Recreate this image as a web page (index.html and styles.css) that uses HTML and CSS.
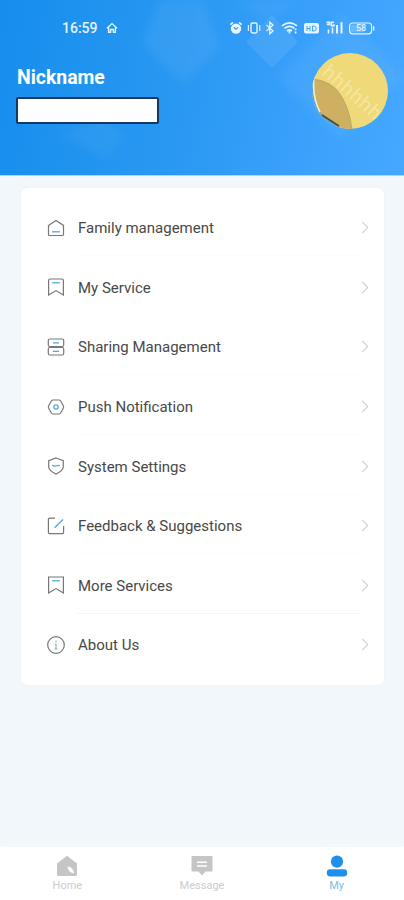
FILE: index.html
```html
<!DOCTYPE html>
<html lang="en">
	<head>
		<meta charset="UTF-8">
		<title>My</title>
		<link rel="stylesheet" href="styles.css">
	</head>
	<body>
		<div class="header">
			<svg class="header-bg" viewBox="0 0 404 176">
				<g fill="#fff">
					<path class="soft" opacity=".06" d="M160 0H204L219 48L183 84L142 43z"/>
					<path opacity=".08" d="M272 15L298 42L272 68L246 42z"/>
					<path class="soft" opacity=".05" d="M342 14L403 76L340 139L278 78z"/>
					<path class="soft" opacity=".045" d="M103 114L125 136L107 160L60 134z"/>
					<path class="soft" opacity=".04" d="M237 0H298L267 24z"/>
				</g>
			</svg>
			<div class="status">
				<span class="time">16:59</span>
				<svg class="status-home" viewBox="0 0 12 12"><path d="M1 6.2L6 1.6L11 6.2M2.6 5.5V10.4H4.6V7.5H7.4V10.4H9.4V5.5" fill="none" stroke="#e6f4ff" stroke-width="1.4"/></svg>
				<svg class="status-icons" viewBox="0 0 146 16" fill="none" stroke="#e6f4ff">
					<circle cx="7" cy="8.6" r="5.2" fill="#e6f4ff" stroke="none"/>
					<path d="M1.4 4.6L4 2.4M12.6 4.6L10 2.4" stroke-width="1.6"/>
					<path d="M4.8 7.2L7 9.2L9.2 7.4" stroke="#3397f3" stroke-width="1.2"/>
					<rect x="22" y="3" width="6" height="10" rx="1.4" stroke-width="1.4"/>
					<path d="M19.4 5V11M30.8 5V11" stroke-width="1.1"/>
					<path d="M37.5 5L44 11L40.8 13.8V2.2L44 5L37.5 11" stroke-width="1.3"/>
					<path d="M53 5.8Q60.5 -.2 68 5.8M55.5 8.4Q60.5 4.4 65.5 8.4M58 11Q60.5 9 63 11" stroke-width="1.7"/>
					<path d="M60.5 11V13.4M66.6 8.5V10.3M66.6 11.5V13.5" stroke-width="1.7"/>
					<rect x="75" y="3" width="15" height="10.6" rx="2" fill="#e6f4ff" stroke="none"/>
					<path d="M78 6V11M81 6V11M78 8.5H81M83.5 6V11H85Q87.3 10.5 87.3 8.5T85 6H83.5" stroke="#3397f3" stroke-width=".9"/>
					<path d="M97.5 2.2H100.5V4.4H97.8M105 2.2H102.5V5.8H105V4.2M99.5 9.5V13.6M103.5 7.5V13.6" stroke-width="1.6"/>
					<path d="M108 5V13.6M112.5 2.2V13.6" stroke-width="2"/>
					<rect x="120.6" y="3" width="22" height="10.8" rx="3" stroke-width="1.2"/>
					<path d="M144.7 6.3V10.4" stroke-width="1.4"/>
					<rect x="122" y="4.6" width="13" height="7.6" rx="1" fill="#e6f4ff" stroke="none" opacity=".25"/>
					<text x="127" y="11.4" class="battery-text">58</text>
				</svg>
			</div>
			<div class="user">
				<div>
					<div class="nickname">Nickname</div>
					<div class="account"></div>
				</div>
				<svg class="avatar" viewBox="0 0 76 76">
					<clipPath id="round"><circle cx="38" cy="38" r="38"/></clipPath>
					<g clip-path="url(#round)">
						<rect width="76" height="76" fill="#efd978"/>
						<path d="M-2 26Q21 26 31 46Q38 59 40 78H-2z" fill="#cfb063"/>
						<path d="M-1 26Q21 27 31 46Q38 59 40 77" fill="none" stroke="#bda765"/>
						<path d="M1 24Q1 50 10 62L27 73L24 78H-2V24z" fill="#42a4fa"/>
						<path d="M2 24Q0 45 8 59" fill="none" stroke="#f1edcf" stroke-width="1.6"/>
						<path d="M10 62L27 73" stroke="#4d4c36" stroke-width="1.6"/>
						<text class="avatar-text" transform="translate(9 21) rotate(41)">hhhhhh</text>
					</g>
				</svg>
			</div>
		</div>
		<ul class="menu">
			<li>
				<svg class="icon" viewBox="0 0 18 18"><path d="M1.5 6.4L9 1.5L16.5 6.4V15.4Q16.5 16.5 15.4 16.5H2.6Q1.5 16.5 1.5 15.4z"/><path class="blue" d="M5 12.8H13"/></svg>
				<span>Family management</span>
				<svg class="arrow" viewBox="0 0 8 14"><path d="M1 1L7 7L1 13"/></svg>
			</li>
			<li>
				<svg class="icon" viewBox="0 0 18 18"><path d="M1.6 17V2.3Q1.6 1 3 1H15Q16.4 1 16.4 2.3V17L9 12.6z"/><path class="blue" d="M5.2 4.8H12.8"/></svg>
				<span>My Service</span>
				<svg class="arrow" viewBox="0 0 8 14"><path d="M1 1L7 7L1 13"/></svg>
			</li>
			<li>
				<svg class="icon" viewBox="0 0 18 18"><rect x="1.3" y="1" width="15.4" height="7.5" rx="1.5"/><rect x="1.3" y="9.5" width="15.4" height="7.5" rx="1.5"/><path class="blue" d="M6 4.9H12M6 13.3H12"/></svg>
				<span>Sharing Management</span>
				<svg class="arrow" viewBox="0 0 8 14"><path d="M1 1L7 7L1 13"/></svg>
			</li>
			<li>
				<svg class="icon" viewBox="0 0 18 18"><path d="M5.8 2H12.2Q13 2 13.5 2.8L16.4 8Q16.8 9 16.4 10L13.5 15.2Q13 16 12.2 16H5.8Q5 16 4.5 15.2L1.6 10Q1.2 9 1.6 8L4.5 2.8Q5 2 5.8 2z"/><circle class="blue" cx="9" cy="9" r="2.1"/></svg>
				<span>Push Notification</span>
				<svg class="arrow" viewBox="0 0 8 14"><path d="M1 1L7 7L1 13"/></svg>
			</li>
			<li>
				<svg class="icon" viewBox="0 0 18 18"><path d="M9 1L16.3 3.6V10Q16 13.6 9 17.2Q2 13.6 1.7 10V3.6z"/><path class="blue" d="M5.2 8.3Q7.2 9.6 9 9T12.8 8.3"/></svg>
				<span>System Settings</span>
				<svg class="arrow" viewBox="0 0 8 14"><path d="M1 1L7 7L1 13"/></svg>
			</li>
			<li>
				<svg class="icon" viewBox="0 0 18 18"><path d="M8 1.2H2.6Q1.4 1.2 1.4 2.4V15.4Q1.4 16.6 2.6 16.6H15.2Q16.6 16.6 16.6 15.2V9"/><path class="blue" d="M7.6 10.8L16 2.5"/></svg>
				<span>Feedback &amp; Suggestions</span>
				<svg class="arrow" viewBox="0 0 8 14"><path d="M1 1L7 7L1 13"/></svg>
			</li>
			<li>
				<svg class="icon" viewBox="0 0 18 18"><path d="M1.6 17V1H16.4V17L9 12.6z"/><path class="blue" d="M5.2 4.8H12.8"/></svg>
				<span>More Services</span>
				<svg class="arrow" viewBox="0 0 8 14"><path d="M1 1L7 7L1 13"/></svg>
			</li>
			<li>
				<svg class="icon" viewBox="0 0 18 18"><circle cx="9" cy="9" r="8.3"/><path class="info" d="M9 4.6V6.2M7.8 8H9V13M7.5 13H10.5"/></svg>
				<span>About Us</span>
				<svg class="arrow" viewBox="0 0 8 14"><path d="M1 1L7 7L1 13"/></svg>
			</li>
		</ul>
		<div class="tabbar">
			<div class="tab">
				<svg viewBox="0 0 22 22"><path d="M1 8.4L11 .8L21 8.4V19.5Q21 21 19.5 21H2.5Q1 21 1 19.5z" fill="#c5c5c5"/><path d="M11.3 11.4Q17 11.6 18.2 18.3Q12.2 17.5 11.3 11.4z" fill="#fff"/></svg>
				<span>Home</span>
			</div>
			<div class="tab">
				<svg viewBox="0 0 22 22"><path d="M1.5 1H20.5Q21.5 1 21.5 2V15.5Q21.5 16.5 20.5 16.5H14.5L11 20.5L7.5 16.5H1.5Q.5 16.5 .5 15.5V2Q.5 1 1.5 1z" fill="#c5c5c5"/><path d="M6 7.2H16M6 11H16" stroke="#fff" stroke-width="1.5"/></svg>
				<span>Message</span>
			</div>
			<div class="tab active">
				<svg viewBox="0 0 22 22" fill="#1e8fea"><circle cx="11" cy="6.6" r="6.1"/><rect x=".8" y="14.2" width="20.4" height="7.2" rx="3.4"/></svg>
				<span>My</span>
			</div>
		</div>
	</body>
</html>
```
FILE: styles.css
```css
*{
	margin:0;
	padding:0;
	box-sizing:border-box;
}
body{
	display:flex;
	flex-direction:column;
	height:900px;
	background:#f2f7fb;
	font-family:Roboto,"Liberation Sans",sans-serif;
	overflow:hidden;
}
svg{
	display:block;
	flex:none;
}
.header{
	position:relative;
	height:176px;
	padding-top:20px;
	background:linear-gradient(100deg,#168eed 0%,#2998f2 45%,#379ffa 70%,#46a8ff 100%);
	border-bottom:1px solid #a9d5fa;
}
.header-bg{
	position:absolute;
	left:0;
	top:0;
	width:404px;
	height:176px;
}
.soft{
	filter:blur(4px);
}
.status{
	position:relative;
	display:flex;
	align-items:center;
	height:16px;
	padding-left:62px;
}
.time{
	width:44px;
	font-size:14px;
	font-weight:500;
	color:#e6f4ff;
}
.status-home{
	width:12px;
	height:12px;
}
.status-icons{
	width:146px;
	height:16px;
	margin-left:111px;
}
.battery-text{
	font-size:9px;
	font-weight:500;
	fill:#e6f4ff;
	stroke:none;
}
.user{
	position:relative;
	display:flex;
	justify-content:space-between;
	padding:17px 16px 0;
}
.nickname{
	height:44px;
	padding:12px 0 0 1px;
	line-height:25px;
	font-size:19.4px;
	font-weight:700;
	color:#fff;
}
.account{
	width:143px;
	height:27px;
	background:#fff;
	border:2px solid #173764;
	border-radius:2px;
}
.avatar{
	width:76px;
	height:76px;
}
.avatar-text{
	font-size:20px;
	letter-spacing:1px;
	fill:#f6e69f;
}
.menu{
	width:363px;
	height:497px;
	margin:12px 0 0 21px;
	padding:10px 15px 10px 26px;
	background:#fff;
	border-radius:7px;
	box-shadow:0 0 3px #eaf0f4;
	list-style:none;
}
.menu li{
	display:flex;
	align-items:center;
	height:59.6px;
	font-size:15px;
	color:#484848;
}
.menu span{
	flex:1;
	height:57px;
	margin-left:13px;
	line-height:59px;
}
.menu li:not(:last-child) span{
	border-bottom:1px solid #fbfbfb;
}
.menu li:nth-child(7) span{
	border-color:#f5f5f5;
}
.icon{
	width:18px;
	height:18px;
	fill:none;
	stroke:#777;
	stroke-width:1.2;
}
.icon .blue{
	stroke:#4ba9df;
	stroke-width:1.3;
}
.icon .info{
	stroke:#91b7bb;
}
.arrow{
	width:8px;
	height:13px;
	fill:none;
	stroke:#d0d0d0;
	stroke-width:1.2;
}
.tabbar{
	display:flex;
	height:53px;
	margin-top:auto;
	background:#fff;
	box-shadow:0 0 4px #fafcfd;
}
.tab{
	display:flex;
	flex:1;
	flex-direction:column;
	align-items:center;
	padding-top:8px;
	font-size:11px;
	line-height:14px;
	color:#ccc;
}
.tab svg{
	width:22px;
	height:22px;
	margin-bottom:2px;
}
.tab.active{
	color:#79bfe9;
}
```
